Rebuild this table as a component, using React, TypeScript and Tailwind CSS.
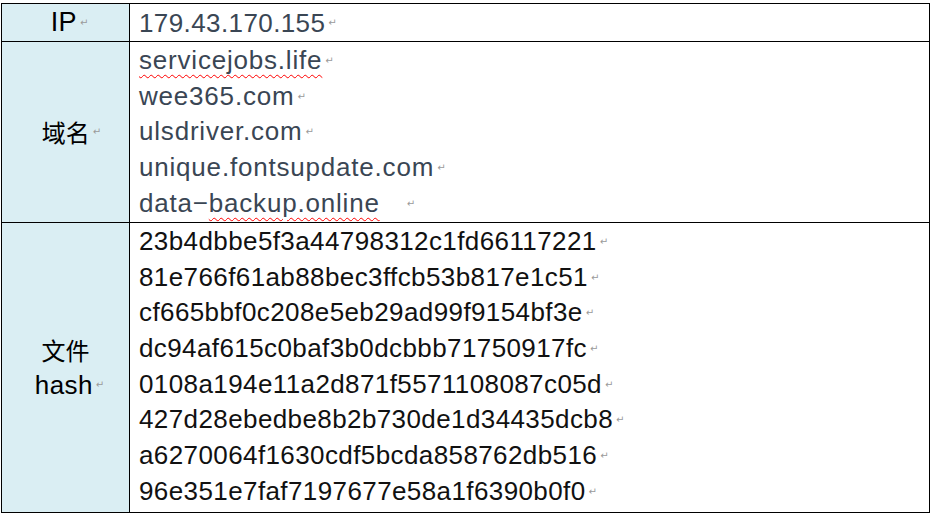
import React from "react";

const Mark = () => (
  <span className="ml-[3px] align-middle text-[10px] leading-none text-[#9a9a9a] tracking-normal" style={{ fontFamily: '"DejaVu Sans", sans-serif' }}>
    ↵
  </span>
);

const domains: { pre: string; wavy?: string; post?: string }[] = [
  { pre: "", wavy: "servicejobs.life" },
  { pre: "wee365.com" },
  { pre: "ulsdriver.com" },
  { pre: "unique.fontsupdate.com" },
  { pre: "data\u2212", wavy: "backup.online", post: "\u00a0\u00a0\u00a0" },
];

const hashes = [
  "23b4dbbe5f3a44798312c1fd66117221",
  "81e766f61ab88bec3ffcb53b817e1c51",
  "cf665bbf0c208e5eb29ad99f9154bf3e",
  "dc94af615c0baf3b0dcbbb71750917fc",
  "0108a194e11a2d871f5571108087c05d",
  "427d28ebedbe8b2b730de1d34435dcb8",
  "a6270064f1630cdf5bcda858762db516",
  "96e351e7faf7197677e58a1f6390b0f0",
];

export default function App() {
  return (
    <div className="w-[933px] h-[514px] bg-white overflow-hidden" style={{ fontFamily: '"Liberation Sans", "Noto Sans CJK SC", sans-serif' }}>
      <div className="ml-[1px] mt-[3px] w-[929px] border border-black text-[26px] tracking-[0.4px]">
        {/* Row 1 */}
        <div className="flex h-[38px] border-b border-black">
          <div className="w-[128px] shrink-0 border-r border-black bg-[#daeef3] flex items-center justify-center text-black pl-[8px]">
            <span className="text-[27px]">IP</span>
            <Mark />
          </div>
          <div className="flex-1 flex items-center pl-[9px] text-[#3a4654] leading-[36px]">
            <span>179.43.170.155</span>
            <Mark />
          </div>
        </div>
        {/* Row 2 */}
        <div className="flex h-[181px] border-b border-black">
          <div className="w-[128px] shrink-0 border-r border-black bg-[#daeef3] flex items-center justify-center text-black pl-[12px]" style={{ fontFamily: '"Noto Sans CJK SC", sans-serif' }}>
            <span className="text-[24px] tracking-normal">域名</span>
            <Mark />
          </div>
          <div className="flex-1 flex flex-col pl-[9px] pt-[1px] text-[#3a4654] leading-[35.7px] tracking-[0.8px]">
            {domains.map((d, i) => (
              <div key={i} className="whitespace-pre flex items-center h-[35.7px]">
                <span>{d.pre}</span>
                {d.wavy && (
                  <span className="underline decoration-wavy decoration-[#ff0000] decoration-1 underline-offset-[5px]">{d.wavy}</span>
                )}
                {d.post && <span>{d.post}</span>}
                <Mark />
              </div>
            ))}
          </div>
        </div>
        {/* Row 3 */}
        <div className="flex h-[289px]">
          <div className="w-[128px] shrink-0 border-r border-black bg-[#daeef3] flex flex-col items-center justify-center text-black leading-[35.7px]">
            <span className="text-[24px] tracking-normal" style={{ fontFamily: '"Noto Sans CJK SC", sans-serif' }}>文件</span>
            <span className="flex items-center pl-[8px]">
              <span>hash</span>
              <Mark />
            </span>
          </div>
          <div className="flex-1 flex flex-col pl-[9px] pt-[1px] text-[#111] leading-[35.7px]">
            {hashes.map((h, i) => (
              <div key={i} className="flex items-center h-[35.7px]">
                <span>{h}</span>
                <Mark />
              </div>
            ))}
          </div>
        </div>
      </div>
    </div>
  );
}
